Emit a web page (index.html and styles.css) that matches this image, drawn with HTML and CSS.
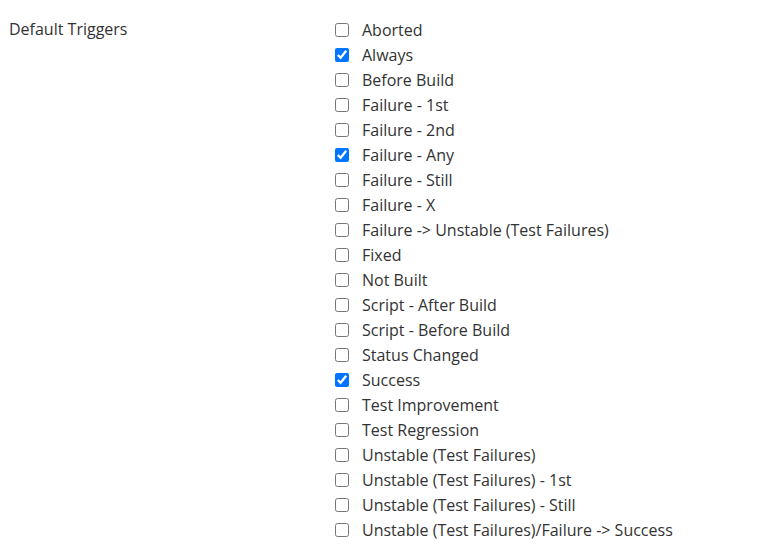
FILE: index.html
```html
<!DOCTYPE html>
<html>
<head>
<meta charset="utf-8">
<link rel="stylesheet" href="styles.css">
</head>
<body>
<div class="setting">
  <div class="setting-name">Default Triggers</div>
  <div class="setting-main">
    <label class="opt"><input type="checkbox"><span>Aborted</span></label>
    <label class="opt"><input type="checkbox" checked><span>Always</span></label>
    <label class="opt"><input type="checkbox"><span>Before Build</span></label>
    <label class="opt"><input type="checkbox"><span>Failure - 1st</span></label>
    <label class="opt"><input type="checkbox"><span>Failure - 2nd</span></label>
    <label class="opt"><input type="checkbox" checked><span>Failure - Any</span></label>
    <label class="opt"><input type="checkbox"><span>Failure - Still</span></label>
    <label class="opt"><input type="checkbox"><span>Failure - X</span></label>
    <label class="opt"><input type="checkbox"><span>Failure -&gt; Unstable (Test Failures)</span></label>
    <label class="opt"><input type="checkbox"><span>Fixed</span></label>
    <label class="opt"><input type="checkbox"><span>Not Built</span></label>
    <label class="opt"><input type="checkbox"><span>Script - After Build</span></label>
    <label class="opt"><input type="checkbox"><span>Script - Before Build</span></label>
    <label class="opt"><input type="checkbox"><span>Status Changed</span></label>
    <label class="opt"><input type="checkbox" checked><span>Success</span></label>
    <label class="opt"><input type="checkbox"><span>Test Improvement</span></label>
    <label class="opt"><input type="checkbox"><span>Test Regression</span></label>
    <label class="opt"><input type="checkbox"><span>Unstable (Test Failures)</span></label>
    <label class="opt"><input type="checkbox"><span>Unstable (Test Failures) - 1st</span></label>
    <label class="opt"><input type="checkbox"><span>Unstable (Test Failures) - Still</span></label>
    <label class="opt"><input type="checkbox"><span>Unstable (Test Failures)/Failure -&gt; Success</span></label>
  </div>
</div>
</body>
</html>
```
FILE: styles.css
```css
html, body {
  margin: 0;
  padding: 0;
  background: #fff;
}
body {
  font-family: "Open Sans", "Noto Sans", sans-serif;
  font-size: 16px;
  color: #333;
}
.setting {
  display: grid;
  grid-template-columns: 326px 1fr;
  padding: 17px 0 0 9px;
}
.setting-name {
  line-height: 25px;
}
.setting-main {
  display: flex;
  flex-direction: column;
}
.opt {
  display: flex;
  align-items: center;
  height: 25px;
}
.opt input {
  width: 14px;
  height: 14px;
  margin: 0 13px 0 0;
  accent-color: #0075ff;
}
```
